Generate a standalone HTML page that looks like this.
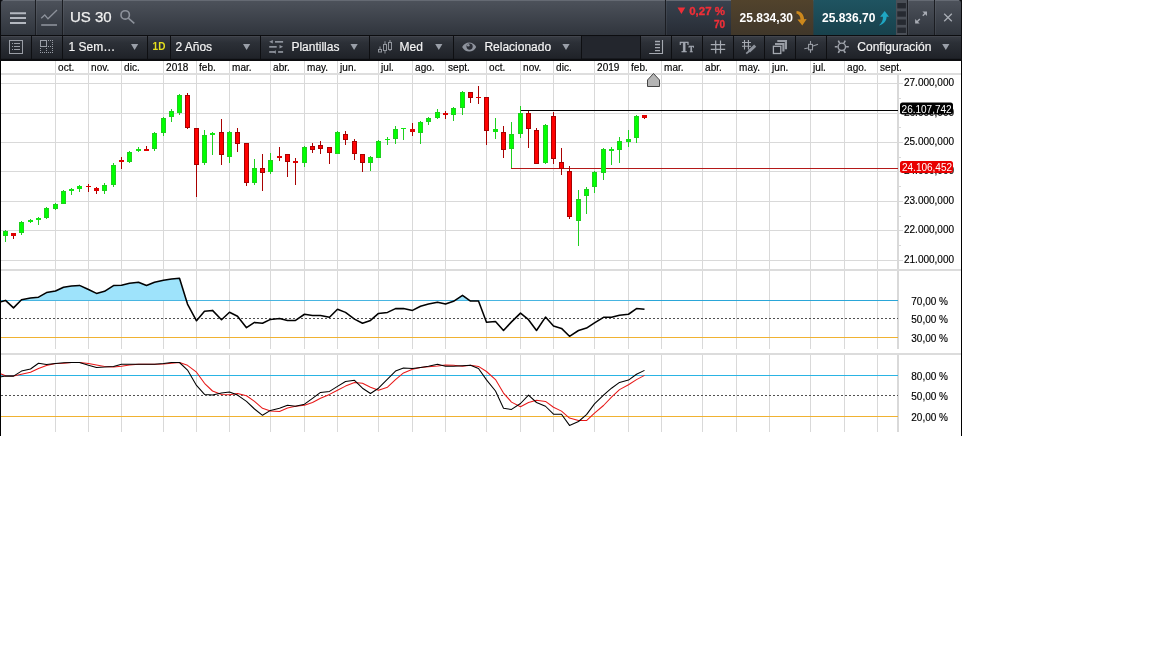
<!DOCTYPE html>
<html lang="es"><head><meta charset="utf-8"><title>US 30</title>
<style>html,body{margin:0;padding:0;background:#fff;overflow:hidden}body{width:1152px;height:648px;position:relative;font-family:"Liberation Sans",Arial,sans-serif}svg{position:absolute;left:0;top:0;display:block;will-change:transform;opacity:.999}text{font-family:"Liberation Sans",Arial,sans-serif}</style></head><body>
<svg width="1152" height="648" viewBox="0 0 1152 648">
<defs>
<linearGradient id="gTop" x1="0" y1="0" x2="0" y2="1"><stop offset="0" stop-color="#4d525b"/><stop offset="1" stop-color="#30353d"/></linearGradient>
<linearGradient id="gBtn" x1="0" y1="0" x2="0" y2="1"><stop offset="0" stop-color="#393d45"/><stop offset="0.3" stop-color="#2c3037"/><stop offset="1" stop-color="#1f2228"/></linearGradient>
<linearGradient id="gChg" x1="0" y1="0" x2="0" y2="1"><stop offset="0" stop-color="#39424e"/><stop offset="1" stop-color="#272c35"/></linearGradient>
<linearGradient id="gSell" x1="0" y1="0" x2="0" y2="1"><stop offset="0" stop-color="#52432c"/><stop offset="1" stop-color="#40372a"/></linearGradient>
<linearGradient id="gBuy" x1="0" y1="0" x2="0" y2="1"><stop offset="0" stop-color="#1f5461"/><stop offset="1" stop-color="#18414c"/></linearGradient>
</defs>
<rect x="0" y="0" width="1152" height="648" fill="#fff"/>
<g id="chart" shape-rendering="crispEdges">
<rect x="55.0" y="61" width="1" height="288" fill="#d9d9d9"/>
<rect x="55.0" y="355" width="1" height="77" fill="#d9d9d9"/>
<rect x="88.0" y="61" width="1" height="288" fill="#d9d9d9"/>
<rect x="88.0" y="355" width="1" height="77" fill="#d9d9d9"/>
<rect x="121.0" y="61" width="1" height="288" fill="#d9d9d9"/>
<rect x="121.0" y="355" width="1" height="77" fill="#d9d9d9"/>
<rect x="163.0" y="61" width="1" height="288" fill="#d9d9d9"/>
<rect x="163.0" y="355" width="1" height="77" fill="#d9d9d9"/>
<rect x="196.0" y="61" width="1" height="288" fill="#d9d9d9"/>
<rect x="196.0" y="355" width="1" height="77" fill="#d9d9d9"/>
<rect x="229.0" y="61" width="1" height="288" fill="#d9d9d9"/>
<rect x="229.0" y="355" width="1" height="77" fill="#d9d9d9"/>
<rect x="270.0" y="61" width="1" height="288" fill="#d9d9d9"/>
<rect x="270.0" y="355" width="1" height="77" fill="#d9d9d9"/>
<rect x="304.0" y="61" width="1" height="288" fill="#d9d9d9"/>
<rect x="304.0" y="355" width="1" height="77" fill="#d9d9d9"/>
<rect x="337.0" y="61" width="1" height="288" fill="#d9d9d9"/>
<rect x="337.0" y="355" width="1" height="77" fill="#d9d9d9"/>
<rect x="378.0" y="61" width="1" height="288" fill="#d9d9d9"/>
<rect x="378.0" y="355" width="1" height="77" fill="#d9d9d9"/>
<rect x="412.0" y="61" width="1" height="288" fill="#d9d9d9"/>
<rect x="412.0" y="355" width="1" height="77" fill="#d9d9d9"/>
<rect x="445.0" y="61" width="1" height="288" fill="#d9d9d9"/>
<rect x="445.0" y="355" width="1" height="77" fill="#d9d9d9"/>
<rect x="486.0" y="61" width="1" height="288" fill="#d9d9d9"/>
<rect x="486.0" y="355" width="1" height="77" fill="#d9d9d9"/>
<rect x="520.0" y="61" width="1" height="288" fill="#d9d9d9"/>
<rect x="520.0" y="355" width="1" height="77" fill="#d9d9d9"/>
<rect x="553.0" y="61" width="1" height="288" fill="#d9d9d9"/>
<rect x="553.0" y="355" width="1" height="77" fill="#d9d9d9"/>
<rect x="594.0" y="61" width="1" height="288" fill="#d9d9d9"/>
<rect x="594.0" y="355" width="1" height="77" fill="#d9d9d9"/>
<rect x="628.0" y="61" width="1" height="288" fill="#d9d9d9"/>
<rect x="628.0" y="355" width="1" height="77" fill="#d9d9d9"/>
<rect x="661.0" y="61" width="1" height="288" fill="#d9d9d9"/>
<rect x="661.0" y="355" width="1" height="77" fill="#d9d9d9"/>
<rect x="702.0" y="61" width="1" height="288" fill="#d9d9d9"/>
<rect x="702.0" y="355" width="1" height="77" fill="#d9d9d9"/>
<rect x="736.0" y="61" width="1" height="288" fill="#d9d9d9"/>
<rect x="736.0" y="355" width="1" height="77" fill="#d9d9d9"/>
<rect x="769.0" y="61" width="1" height="288" fill="#d9d9d9"/>
<rect x="769.0" y="355" width="1" height="77" fill="#d9d9d9"/>
<rect x="810.0" y="61" width="1" height="288" fill="#d9d9d9"/>
<rect x="810.0" y="355" width="1" height="77" fill="#d9d9d9"/>
<rect x="844.0" y="61" width="1" height="288" fill="#d9d9d9"/>
<rect x="844.0" y="355" width="1" height="77" fill="#d9d9d9"/>
<rect x="877.0" y="61" width="1" height="288" fill="#d9d9d9"/>
<rect x="877.0" y="355" width="1" height="77" fill="#d9d9d9"/>
<rect x="1" y="83" width="902" height="1" fill="#d9d9d9"/>
<rect x="1" y="113" width="902" height="1" fill="#d9d9d9"/>
<rect x="1" y="142" width="902" height="1" fill="#d9d9d9"/>
<rect x="1" y="171" width="902" height="1" fill="#d9d9d9"/>
<rect x="1" y="201" width="902" height="1" fill="#d9d9d9"/>
<rect x="1" y="230" width="902" height="1" fill="#d9d9d9"/>
<rect x="1" y="260" width="902" height="1" fill="#d9d9d9"/>
<rect x="899" y="98" width="2" height="1" fill="#d9d9d9"/>
<rect x="899" y="127" width="2" height="1" fill="#d9d9d9"/>
<rect x="899" y="157" width="2" height="1" fill="#d9d9d9"/>
<rect x="899" y="186" width="2" height="1" fill="#d9d9d9"/>
<rect x="899" y="216" width="2" height="1" fill="#d9d9d9"/>
<rect x="899" y="245" width="2" height="1" fill="#d9d9d9"/>
<rect x="1" y="73" width="960" height="2" fill="#dedede"/>
<rect x="897" y="74" width="2" height="275" fill="#d9d9d9"/>
<rect x="897" y="355" width="2" height="77" fill="#d9d9d9"/>
<rect x="1" y="269" width="960" height="2" fill="#dcdcdc"/>
<rect x="1" y="353" width="960" height="2" fill="#dcdcdc"/>
</g>
<g font-size="10" fill="#000" stroke="#000" stroke-width="0.15">
<text x="58.1" y="71.2">oct.</text>
<text x="91.1" y="71.2">nov.</text>
<text x="124.1" y="71.2">dic.</text>
<text x="166.1" y="71.2">2018</text>
<text x="199.1" y="71.2">feb.</text>
<text x="232.1" y="71.2">mar.</text>
<text x="273.1" y="71.2">abr.</text>
<text x="307.1" y="71.2">may.</text>
<text x="340.1" y="71.2">jun.</text>
<text x="381.1" y="71.2">jul.</text>
<text x="415.1" y="71.2">ago.</text>
<text x="448.1" y="71.2">sept.</text>
<text x="489.1" y="71.2">oct.</text>
<text x="523.1" y="71.2">nov.</text>
<text x="556.1" y="71.2">dic.</text>
<text x="597.1" y="71.2">2019</text>
<text x="631.1" y="71.2">feb.</text>
<text x="664.1" y="71.2">mar.</text>
<text x="705.1" y="71.2">abr.</text>
<text x="739.1" y="71.2">may.</text>
<text x="772.1" y="71.2">jun.</text>
<text x="813.1" y="71.2">jul.</text>
<text x="847.1" y="71.2">ago.</text>
<text x="880.1" y="71.2">sept.</text>
</g>
<g font-size="10" fill="#000" stroke="#000" stroke-width="0.15">
<text x="904" y="86.4">27.000,000</text>
<text x="904" y="116.4">26.000,000</text>
<text x="904" y="145.4">25.000,000</text>
<text x="904" y="174.4">24.000,000</text>
<text x="904" y="204.4">23.000,000</text>
<text x="904" y="233.4">22.000,000</text>
<text x="904" y="263.4">21.000,000</text>
</g>
<g shape-rendering="crispEdges">
<rect x="1" y="300" width="897" height="1" fill="#2aa6d8"/>
<rect x="1" y="337" width="897" height="1" fill="#f0b232"/>
<rect x="1" y="375" width="897" height="1" fill="#2ab4e4"/>
<rect x="1" y="416" width="897" height="1" fill="#f0b232"/>
<line x1="1" y1="318.5" x2="898" y2="318.5" stroke="#505050" stroke-width="1" stroke-dasharray="2 2"/>
<line x1="1" y1="395.5" x2="898" y2="395.5" stroke="#505050" stroke-width="1" stroke-dasharray="2 2"/>
</g>
<clipPath id="c70"><rect x="0" y="270" width="898" height="30.5"/></clipPath>
<polygon clip-path="url(#c70)" points="0.0,300.5 0.0,302.0 5.5,300.4 13.5,307.9 21.5,299.7 30.5,298.1 38.5,297.2 46.5,292.6 55.5,291.0 63.5,287.2 71.5,286.0 79.5,285.4 88.5,289.5 96.5,293.4 104.5,291.3 113.5,285.6 121.5,285.2 129.5,283.3 138.5,282.3 146.5,285.5 154.5,282.3 163.5,280.3 171.5,279.1 179.5,278.3 187.5,304.1 196.5,320.8 204.5,311.3 212.5,310.4 221.5,319.7 229.5,312.2 237.5,316.2 246.5,327.7 254.5,322.4 262.5,323.3 270.5,319.4 279.5,318.4 287.5,320.4 295.5,320.4 304.5,314.25 312.5,315.5 320.5,315.5 329.5,317.3 337.5,309.25 345.5,312.4 354.5,319.1 362.5,323.3 370.5,320.4 378.5,313.4 387.5,312.4 395.5,308.6 403.5,308.6 412.5,310.4 420.5,306.2 428.5,304.1 437.5,302.3 445.5,304.1 453.5,301.3 462.5,295.4 470.5,301.05 478.5,301.05 486.5,322.2 495.5,321.5 503.5,330.5 511.5,321.9 520.5,313.1 528.5,319.7 536.5,330.5 545.5,317.1 553.5,326.05 561.5,328.4 569.5,336.3 578.5,330.5 586.5,328.1 594.5,322.9 603.5,317.3 611.5,317.3 619.5,315.2 628.5,314.25 636.5,308.6 644.5,309.25 644.5,300.5" fill="#9ee3fb"/>
<polyline points="0.0,302.0 5.5,300.4 13.5,307.9 21.5,299.7 30.5,298.1 38.5,297.2 46.5,292.6 55.5,291.0 63.5,287.2 71.5,286.0 79.5,285.4 88.5,289.5 96.5,293.4 104.5,291.3 113.5,285.6 121.5,285.2 129.5,283.3 138.5,282.3 146.5,285.5 154.5,282.3 163.5,280.3 171.5,279.1 179.5,278.3 187.5,304.1 196.5,320.8 204.5,311.3 212.5,310.4 221.5,319.7 229.5,312.2 237.5,316.2 246.5,327.7 254.5,322.4 262.5,323.3 270.5,319.4 279.5,318.4 287.5,320.4 295.5,320.4 304.5,314.25 312.5,315.5 320.5,315.5 329.5,317.3 337.5,309.25 345.5,312.4 354.5,319.1 362.5,323.3 370.5,320.4 378.5,313.4 387.5,312.4 395.5,308.6 403.5,308.6 412.5,310.4 420.5,306.2 428.5,304.1 437.5,302.3 445.5,304.1 453.5,301.3 462.5,295.4 470.5,301.05 478.5,301.05 486.5,322.2 495.5,321.5 503.5,330.5 511.5,321.9 520.5,313.1 528.5,319.7 536.5,330.5 545.5,317.1 553.5,326.05 561.5,328.4 569.5,336.3 578.5,330.5 586.5,328.1 594.5,322.9 603.5,317.3 611.5,317.3 619.5,315.2 628.5,314.25 636.5,308.6 644.5,309.25" fill="none" stroke="#000" stroke-width="1.55" stroke-linejoin="round"/>
<polyline points="0.0,373.6 5.5,375.7 13.5,376.1 21.5,374.3 30.5,372.2 38.5,368.5 46.5,365.6 55.5,363.6 63.5,363.2 71.5,362.5 79.5,362.5 88.5,363.5 96.5,365.0 104.5,366.4 113.5,367.1 121.5,366.25 129.5,365.0 138.5,364.3 146.5,364.3 154.5,364.3 163.5,363.9 171.5,363.2 179.5,362.5 187.5,365.3 196.5,372.2 204.5,383.3 212.5,391.0 221.5,394.4 229.5,394.7 237.5,393.5 246.5,395.8 254.5,401.4 262.5,408.3 270.5,411.1 279.5,411.4 287.5,408.05 295.5,406.25 304.5,405.3 312.5,402.5 320.5,398.2 329.5,394.4 337.5,390.3 345.5,386.1 354.5,382.4 362.5,383.3 370.5,387.2 378.5,390.3 387.5,387.2 395.5,379.6 403.5,372.9 412.5,369.2 420.5,367.4 428.5,366.7 437.5,366.0 445.5,365.0 453.5,365.3 462.5,366.25 470.5,365.3 478.5,366.4 486.5,371.5 495.5,379.6 503.5,393.05 511.5,402.1 520.5,406.7 528.5,402.5 536.5,400.3 545.5,401.4 553.5,407.2 561.5,411.1 569.5,418.05 578.5,420.4 586.5,420.55 594.5,413.2 603.5,405.5 611.5,397.2 619.5,389.6 628.5,384.7 636.5,379.6 644.5,375.4" fill="none" stroke="#e81818" stroke-width="1.05" stroke-linejoin="round"/>
<polyline points="0.0,377.1 5.5,376.1 13.5,376.1 21.5,371.1 30.5,369.0 38.5,363.2 46.5,364.6 55.5,363.5 63.5,362.8 71.5,362.5 79.5,362.5 88.5,365.3 96.5,367.4 104.5,367.1 113.5,366.4 121.5,364.2 129.5,364.3 138.5,364.3 146.5,364.3 154.5,364.3 163.5,363.5 171.5,362.5 179.5,362.5 187.5,370.1 196.5,385.4 204.5,394.4 212.5,395.1 221.5,393.05 229.5,392.1 237.5,395.1 246.5,401.4 254.5,409.0 262.5,415.3 270.5,410.4 279.5,408.3 287.5,405.3 295.5,406.25 304.5,404.2 312.5,398.3 320.5,392.4 329.5,391.4 337.5,386.4 345.5,381.5 354.5,380.3 362.5,388.2 370.5,393.5 378.5,388.2 387.5,379.2 395.5,371.1 403.5,368.05 412.5,368.5 420.5,367.4 428.5,366.25 437.5,364.3 445.5,366.25 453.5,366.25 462.5,365.7 470.5,365.3 478.5,368.5 486.5,379.9 495.5,391.0 503.5,408.3 511.5,409.4 520.5,403.5 528.5,395.1 536.5,402.5 545.5,406.25 553.5,414.2 561.5,414.3 569.5,425.4 578.5,421.5 586.5,414.6 594.5,403.9 603.5,395.1 611.5,388.2 619.5,382.4 628.5,380.1 636.5,374.3 644.5,370.4" fill="none" stroke="#000" stroke-width="1.05" stroke-linejoin="round"/>
<g font-size="10" fill="#000" stroke="#000" stroke-width="0.15">
<text x="911.3" y="305.4">70,00 %</text>
<text x="911.3" y="323.4">50,00 %</text>
<text x="911.3" y="342.4">30,00 %</text>
<text x="911.3" y="380.4">80,00 %</text>
<text x="911.3" y="400.4">50,00 %</text>
<text x="911.3" y="421.4">20,00 %</text>
</g>
<g shape-rendering="crispEdges">
<rect x="511" y="168" width="387" height="1" fill="#b41818"/>
<rect x="520" y="110" width="378" height="1" fill="#000"/>
</g>
<g shape-rendering="crispEdges">
<rect x="5.0" y="230" width="1" height="12" fill="#1fcf1f"/>
<rect x="3.0" y="231" width="5" height="5" fill="#1fcf1f"/>
<rect x="4.0" y="232" width="3" height="3" fill="#00ff00"/>
<rect x="13.0" y="233" width="1" height="6" fill="#a80000"/>
<rect x="11.0" y="233" width="5" height="3" fill="#e00000"/>
<rect x="21.0" y="221" width="1" height="14" fill="#1fcf1f"/>
<rect x="19.0" y="222" width="5" height="11" fill="#1fcf1f"/>
<rect x="20.0" y="223" width="3" height="9" fill="#00ff00"/>
<rect x="30.0" y="219" width="1" height="4" fill="#1fcf1f"/>
<rect x="28.0" y="220" width="5" height="2" fill="#10e810"/>
<rect x="38.0" y="217" width="1" height="8" fill="#1fcf1f"/>
<rect x="36.0" y="218" width="5" height="2" fill="#10e810"/>
<rect x="46.0" y="207" width="1" height="12" fill="#1fcf1f"/>
<rect x="44.0" y="208" width="5" height="10" fill="#1fcf1f"/>
<rect x="45.0" y="209" width="3" height="8" fill="#00ff00"/>
<rect x="55.0" y="203" width="1" height="7" fill="#1fcf1f"/>
<rect x="53.0" y="204" width="5" height="5" fill="#1fcf1f"/>
<rect x="54.0" y="205" width="3" height="3" fill="#00ff00"/>
<rect x="63.0" y="190" width="1" height="14" fill="#1fcf1f"/>
<rect x="61.0" y="191" width="5" height="13" fill="#1fcf1f"/>
<rect x="62.0" y="192" width="3" height="11" fill="#00ff00"/>
<rect x="71.0" y="188" width="1" height="7" fill="#1fcf1f"/>
<rect x="69.0" y="189" width="5" height="2" fill="#10e810"/>
<rect x="79.0" y="185" width="1" height="7" fill="#1fcf1f"/>
<rect x="77.0" y="186" width="5" height="3" fill="#10e810"/>
<rect x="88.0" y="184" width="1" height="8" fill="#a80000"/>
<rect x="86.0" y="186" width="5" height="1" fill="#e00000"/>
<rect x="96.0" y="187" width="1" height="7" fill="#a80000"/>
<rect x="94.0" y="188" width="5" height="3" fill="#e00000"/>
<rect x="104.0" y="183" width="1" height="11" fill="#1fcf1f"/>
<rect x="102.0" y="185" width="5" height="6" fill="#1fcf1f"/>
<rect x="103.0" y="186" width="3" height="4" fill="#00ff00"/>
<rect x="113.0" y="163" width="1" height="24" fill="#1fcf1f"/>
<rect x="111.0" y="165" width="5" height="20" fill="#1fcf1f"/>
<rect x="112.0" y="166" width="3" height="18" fill="#00ff00"/>
<rect x="121.0" y="157" width="1" height="12" fill="#a80000"/>
<rect x="119.0" y="160" width="5" height="2" fill="#e00000"/>
<rect x="129.0" y="151" width="1" height="12" fill="#1fcf1f"/>
<rect x="127.0" y="152" width="5" height="10" fill="#1fcf1f"/>
<rect x="128.0" y="153" width="3" height="8" fill="#00ff00"/>
<rect x="138.0" y="147" width="1" height="5" fill="#1fcf1f"/>
<rect x="136.0" y="149" width="5" height="2" fill="#10e810"/>
<rect x="146.0" y="146" width="1" height="5" fill="#a80000"/>
<rect x="144.0" y="149" width="5" height="2" fill="#e00000"/>
<rect x="154.0" y="132" width="1" height="19" fill="#1fcf1f"/>
<rect x="152.0" y="133" width="5" height="16" fill="#1fcf1f"/>
<rect x="153.0" y="134" width="3" height="14" fill="#00ff00"/>
<rect x="163.0" y="117" width="1" height="19" fill="#1fcf1f"/>
<rect x="161.0" y="118" width="5" height="15" fill="#1fcf1f"/>
<rect x="162.0" y="119" width="3" height="13" fill="#00ff00"/>
<rect x="171.0" y="109" width="1" height="13" fill="#1fcf1f"/>
<rect x="169.0" y="111" width="5" height="6" fill="#1fcf1f"/>
<rect x="170.0" y="112" width="3" height="4" fill="#00ff00"/>
<rect x="179.0" y="94" width="1" height="21" fill="#1fcf1f"/>
<rect x="177.0" y="95" width="5" height="18" fill="#1fcf1f"/>
<rect x="178.0" y="96" width="3" height="16" fill="#00ff00"/>
<rect x="187.0" y="93" width="1" height="36" fill="#a80000"/>
<rect x="185.0" y="95" width="5" height="33" fill="#a80000"/>
<rect x="186.0" y="96" width="3" height="31" fill="#ff0000"/>
<rect x="196.0" y="128" width="1" height="69" fill="#a80000"/>
<rect x="194.0" y="128" width="5" height="37" fill="#a80000"/>
<rect x="195.0" y="129" width="3" height="35" fill="#ff0000"/>
<rect x="204.0" y="130" width="1" height="35" fill="#1fcf1f"/>
<rect x="202.0" y="135" width="5" height="28" fill="#1fcf1f"/>
<rect x="203.0" y="136" width="3" height="26" fill="#00ff00"/>
<rect x="212.0" y="132" width="1" height="23" fill="#1fcf1f"/>
<rect x="210.0" y="133" width="5" height="2" fill="#10e810"/>
<rect x="221.0" y="119" width="1" height="46" fill="#a80000"/>
<rect x="219.0" y="132" width="5" height="23" fill="#a80000"/>
<rect x="220.0" y="133" width="3" height="21" fill="#ff0000"/>
<rect x="229.0" y="131" width="1" height="32" fill="#1fcf1f"/>
<rect x="227.0" y="132" width="5" height="25" fill="#1fcf1f"/>
<rect x="228.0" y="133" width="3" height="23" fill="#00ff00"/>
<rect x="237.0" y="128" width="1" height="24" fill="#a80000"/>
<rect x="235.0" y="132" width="5" height="12" fill="#a80000"/>
<rect x="236.0" y="133" width="3" height="10" fill="#ff0000"/>
<rect x="246.0" y="143" width="1" height="43" fill="#a80000"/>
<rect x="244.0" y="143" width="5" height="40" fill="#a80000"/>
<rect x="245.0" y="144" width="3" height="38" fill="#ff0000"/>
<rect x="254.0" y="159" width="1" height="26" fill="#1fcf1f"/>
<rect x="252.0" y="168" width="5" height="15" fill="#1fcf1f"/>
<rect x="253.0" y="169" width="3" height="13" fill="#00ff00"/>
<rect x="262.0" y="154" width="1" height="37" fill="#a80000"/>
<rect x="260.0" y="168" width="5" height="5" fill="#a80000"/>
<rect x="261.0" y="169" width="3" height="3" fill="#ff0000"/>
<rect x="270.0" y="153" width="1" height="21" fill="#1fcf1f"/>
<rect x="268.0" y="160" width="5" height="12" fill="#1fcf1f"/>
<rect x="269.0" y="161" width="3" height="10" fill="#00ff00"/>
<rect x="279.0" y="147" width="1" height="14" fill="#a80000"/>
<rect x="277.0" y="156" width="5" height="2" fill="#e00000"/>
<rect x="287.0" y="154" width="1" height="23" fill="#a80000"/>
<rect x="285.0" y="154" width="5" height="8" fill="#a80000"/>
<rect x="286.0" y="155" width="3" height="6" fill="#ff0000"/>
<rect x="295.0" y="158" width="1" height="27" fill="#a80000"/>
<rect x="293.0" y="161" width="5" height="2" fill="#e00000"/>
<rect x="304.0" y="146" width="1" height="21" fill="#1fcf1f"/>
<rect x="302.0" y="147" width="5" height="16" fill="#1fcf1f"/>
<rect x="303.0" y="148" width="3" height="14" fill="#00ff00"/>
<rect x="312.0" y="143" width="1" height="10" fill="#a80000"/>
<rect x="310.0" y="146" width="5" height="4" fill="#a80000"/>
<rect x="311.0" y="147" width="3" height="2" fill="#ff0000"/>
<rect x="320.0" y="141" width="1" height="13" fill="#a80000"/>
<rect x="318.0" y="145" width="5" height="4" fill="#a80000"/>
<rect x="319.0" y="146" width="3" height="2" fill="#ff0000"/>
<rect x="329.0" y="147" width="1" height="17" fill="#a80000"/>
<rect x="327.0" y="147" width="5" height="6" fill="#a80000"/>
<rect x="328.0" y="148" width="3" height="4" fill="#ff0000"/>
<rect x="337.0" y="131" width="1" height="23" fill="#1fcf1f"/>
<rect x="335.0" y="132" width="5" height="22" fill="#1fcf1f"/>
<rect x="336.0" y="133" width="3" height="20" fill="#00ff00"/>
<rect x="345.0" y="131" width="1" height="14" fill="#a80000"/>
<rect x="343.0" y="134" width="5" height="6" fill="#a80000"/>
<rect x="344.0" y="135" width="3" height="4" fill="#ff0000"/>
<rect x="354.0" y="139" width="1" height="21" fill="#a80000"/>
<rect x="352.0" y="141" width="5" height="13" fill="#a80000"/>
<rect x="353.0" y="142" width="3" height="11" fill="#ff0000"/>
<rect x="362.0" y="154" width="1" height="18" fill="#a80000"/>
<rect x="360.0" y="154" width="5" height="9" fill="#a80000"/>
<rect x="361.0" y="155" width="3" height="7" fill="#ff0000"/>
<rect x="370.0" y="156" width="1" height="15" fill="#1fcf1f"/>
<rect x="368.0" y="157" width="5" height="6" fill="#1fcf1f"/>
<rect x="369.0" y="158" width="3" height="4" fill="#00ff00"/>
<rect x="378.0" y="140" width="1" height="18" fill="#1fcf1f"/>
<rect x="376.0" y="141" width="5" height="17" fill="#1fcf1f"/>
<rect x="377.0" y="142" width="3" height="15" fill="#00ff00"/>
<rect x="387.0" y="137" width="1" height="8" fill="#1fcf1f"/>
<rect x="385.0" y="139" width="5" height="1" fill="#10e810"/>
<rect x="395.0" y="126" width="1" height="18" fill="#1fcf1f"/>
<rect x="393.0" y="129" width="5" height="10" fill="#1fcf1f"/>
<rect x="394.0" y="130" width="3" height="8" fill="#00ff00"/>
<rect x="403.0" y="128" width="1" height="12" fill="#1fcf1f"/>
<rect x="401.0" y="128" width="5" height="1" fill="#10e810"/>
<rect x="412.0" y="123" width="1" height="13" fill="#a80000"/>
<rect x="410.0" y="129" width="5" height="3" fill="#e00000"/>
<rect x="420.0" y="121" width="1" height="23" fill="#1fcf1f"/>
<rect x="418.0" y="122" width="5" height="11" fill="#1fcf1f"/>
<rect x="419.0" y="123" width="3" height="9" fill="#00ff00"/>
<rect x="428.0" y="117" width="1" height="8" fill="#1fcf1f"/>
<rect x="426.0" y="118" width="5" height="4" fill="#1fcf1f"/>
<rect x="427.0" y="119" width="3" height="2" fill="#00ff00"/>
<rect x="437.0" y="109" width="1" height="10" fill="#1fcf1f"/>
<rect x="435.0" y="112" width="5" height="6" fill="#1fcf1f"/>
<rect x="436.0" y="113" width="3" height="4" fill="#00ff00"/>
<rect x="445.0" y="111" width="1" height="8" fill="#a80000"/>
<rect x="443.0" y="113" width="5" height="2" fill="#e00000"/>
<rect x="453.0" y="107" width="1" height="14" fill="#1fcf1f"/>
<rect x="451.0" y="108" width="5" height="7" fill="#1fcf1f"/>
<rect x="452.0" y="109" width="3" height="5" fill="#00ff00"/>
<rect x="462.0" y="91" width="1" height="24" fill="#1fcf1f"/>
<rect x="460.0" y="92" width="5" height="16" fill="#1fcf1f"/>
<rect x="461.0" y="93" width="3" height="14" fill="#00ff00"/>
<rect x="470.0" y="92" width="1" height="11" fill="#a80000"/>
<rect x="468.0" y="92" width="5" height="6" fill="#a80000"/>
<rect x="469.0" y="93" width="3" height="4" fill="#ff0000"/>
<rect x="478.0" y="86" width="1" height="18" fill="#a80000"/>
<rect x="476.0" y="97" width="5" height="1" fill="#e00000"/>
<rect x="486.0" y="97" width="1" height="48" fill="#a80000"/>
<rect x="484.0" y="97" width="5" height="34" fill="#a80000"/>
<rect x="485.0" y="98" width="3" height="32" fill="#ff0000"/>
<rect x="495.0" y="118" width="1" height="21" fill="#1fcf1f"/>
<rect x="493.0" y="129" width="5" height="3" fill="#10e810"/>
<rect x="503.0" y="126" width="1" height="32" fill="#a80000"/>
<rect x="501.0" y="132" width="5" height="18" fill="#a80000"/>
<rect x="502.0" y="133" width="3" height="16" fill="#ff0000"/>
<rect x="511.0" y="122" width="1" height="46" fill="#1fcf1f"/>
<rect x="509.0" y="134" width="5" height="15" fill="#1fcf1f"/>
<rect x="510.0" y="135" width="3" height="13" fill="#00ff00"/>
<rect x="520.0" y="106" width="1" height="32" fill="#1fcf1f"/>
<rect x="518.0" y="113" width="5" height="21" fill="#1fcf1f"/>
<rect x="519.0" y="114" width="3" height="19" fill="#00ff00"/>
<rect x="528.0" y="111" width="1" height="37" fill="#a80000"/>
<rect x="526.0" y="113" width="5" height="16" fill="#a80000"/>
<rect x="527.0" y="114" width="3" height="14" fill="#ff0000"/>
<rect x="536.0" y="128" width="1" height="36" fill="#a80000"/>
<rect x="534.0" y="130" width="5" height="34" fill="#a80000"/>
<rect x="535.0" y="131" width="3" height="32" fill="#ff0000"/>
<rect x="545.0" y="124" width="1" height="40" fill="#1fcf1f"/>
<rect x="543.0" y="125" width="5" height="38" fill="#1fcf1f"/>
<rect x="544.0" y="126" width="3" height="36" fill="#00ff00"/>
<rect x="553.0" y="112" width="1" height="52" fill="#a80000"/>
<rect x="551.0" y="116" width="5" height="43" fill="#a80000"/>
<rect x="552.0" y="117" width="3" height="41" fill="#ff0000"/>
<rect x="561.0" y="148" width="1" height="27" fill="#a80000"/>
<rect x="559.0" y="162" width="5" height="7" fill="#a80000"/>
<rect x="560.0" y="163" width="3" height="5" fill="#ff0000"/>
<rect x="569.0" y="166" width="1" height="53" fill="#a80000"/>
<rect x="567.0" y="171" width="5" height="46" fill="#a80000"/>
<rect x="568.0" y="172" width="3" height="44" fill="#ff0000"/>
<rect x="578.0" y="190" width="1" height="56" fill="#1fcf1f"/>
<rect x="576.0" y="199" width="5" height="22" fill="#1fcf1f"/>
<rect x="577.0" y="200" width="3" height="20" fill="#00ff00"/>
<rect x="586.0" y="187" width="1" height="27" fill="#1fcf1f"/>
<rect x="584.0" y="189" width="5" height="7" fill="#1fcf1f"/>
<rect x="585.0" y="190" width="3" height="5" fill="#00ff00"/>
<rect x="594.0" y="171" width="1" height="22" fill="#1fcf1f"/>
<rect x="592.0" y="172" width="5" height="15" fill="#1fcf1f"/>
<rect x="593.0" y="173" width="3" height="13" fill="#00ff00"/>
<rect x="603.0" y="148" width="1" height="32" fill="#1fcf1f"/>
<rect x="601.0" y="149" width="5" height="24" fill="#1fcf1f"/>
<rect x="602.0" y="150" width="3" height="22" fill="#00ff00"/>
<rect x="611.0" y="147" width="1" height="18" fill="#1fcf1f"/>
<rect x="609.0" y="149" width="5" height="2" fill="#10e810"/>
<rect x="619.0" y="137" width="1" height="26" fill="#1fcf1f"/>
<rect x="617.0" y="141" width="5" height="9" fill="#1fcf1f"/>
<rect x="618.0" y="142" width="3" height="7" fill="#00ff00"/>
<rect x="628.0" y="130" width="1" height="17" fill="#1fcf1f"/>
<rect x="626.0" y="139" width="5" height="3" fill="#10e810"/>
<rect x="636.0" y="115" width="1" height="28" fill="#1fcf1f"/>
<rect x="634.0" y="116" width="5" height="22" fill="#1fcf1f"/>
<rect x="635.0" y="117" width="3" height="20" fill="#00ff00"/>
<rect x="644.0" y="115" width="1" height="4" fill="#a80000"/>
<rect x="642.0" y="115" width="5" height="3" fill="#e00000"/>
</g>
<path d="M647.5 86.5 V80 L653.5 73.5 L659.5 80 V86.5 Z" fill="#b4b4b4" stroke="#444" stroke-width="1"/>
<rect x="900" y="102.5" width="53" height="12" rx="2.5" fill="#000"/>
<text x="901.6" y="112.6" font-size="10" fill="#fff">26.107,742</text>
<rect x="900" y="161" width="53" height="12" rx="2.5" fill="#e80000"/>
<text x="902" y="171" font-size="10" fill="#fff">24.106,452</text>
<g shape-rendering="crispEdges">
<rect x="0" y="0" width="1" height="436" fill="#000"/>
<rect x="961" y="0" width="1" height="436" fill="#000"/>
</g>
<g id="bars">
<rect x="0" y="0" width="962" height="61" fill="#0c0d10"/>
<path d="M1 35 V3 Q1 0 4 0 H958 Q961 0 961 3 V35 Z" fill="url(#gTop)"/>
<rect x="3" y="0" width="956" height="1" fill="#6b7079" opacity="0.8"/>
<rect x="665" y="1" width="66" height="34" fill="url(#gChg)"/>
<rect x="731" y="0" width="82.5" height="35" fill="url(#gSell)"/>
<rect x="813.5" y="0" width="82.5" height="35" fill="url(#gBuy)"/>
<rect x="35" y="0" width="1" height="35" fill="#1b1d22" shape-rendering="crispEdges"/>
<rect x="36" y="1" width="1" height="34" fill="#ffffff" opacity="0.06" shape-rendering="crispEdges"/>
<rect x="62" y="0" width="1" height="35" fill="#1b1d22" shape-rendering="crispEdges"/>
<rect x="63" y="1" width="1" height="34" fill="#ffffff" opacity="0.06" shape-rendering="crispEdges"/>
<rect x="665" y="0" width="1" height="35" fill="#1b1d22" shape-rendering="crispEdges"/>
<rect x="666" y="1" width="1" height="34" fill="#ffffff" opacity="0.06" shape-rendering="crispEdges"/>
<rect x="907" y="0" width="1" height="35" fill="#1b1d22" shape-rendering="crispEdges"/>
<rect x="908" y="1" width="1" height="34" fill="#ffffff" opacity="0.06" shape-rendering="crispEdges"/>
<rect x="934" y="0" width="1" height="35" fill="#1b1d22" shape-rendering="crispEdges"/>
<rect x="935" y="1" width="1" height="34" fill="#ffffff" opacity="0.06" shape-rendering="crispEdges"/>
<rect x="896" y="0" width="11" height="35" fill="#4a4f57"/>
<rect x="897.3" y="3" width="8.6" height="5.4" fill="#262a31"/>
<rect x="897.3" y="11.3" width="8.6" height="5.4" fill="#262a31"/>
<rect x="897.3" y="19.5" width="8.6" height="5.4" fill="#262a31"/>
<rect x="897.3" y="27.6" width="8.6" height="5.4" fill="#262a31"/>
<rect x="1" y="36" width="960" height="22.5" fill="#23262d"/>
<rect x="1" y="36" width="30" height="22.5" fill="url(#gBtn)"/>
<rect x="1" y="36" width="30" height="1" fill="#fff" opacity="0.05"/>
<rect x="32" y="36" width="30" height="22.5" fill="url(#gBtn)"/>
<rect x="32" y="36" width="30" height="1" fill="#fff" opacity="0.05"/>
<rect x="63" y="36" width="84" height="22.5" fill="url(#gBtn)"/>
<rect x="63" y="36" width="84" height="1" fill="#fff" opacity="0.05"/>
<rect x="148" y="36" width="22" height="22.5" fill="url(#gBtn)"/>
<rect x="148" y="36" width="22" height="1" fill="#fff" opacity="0.05"/>
<rect x="171" y="36" width="89" height="22.5" fill="url(#gBtn)"/>
<rect x="171" y="36" width="89" height="1" fill="#fff" opacity="0.05"/>
<rect x="261" y="36" width="108" height="22.5" fill="url(#gBtn)"/>
<rect x="261" y="36" width="108" height="1" fill="#fff" opacity="0.05"/>
<rect x="370" y="36" width="83" height="22.5" fill="url(#gBtn)"/>
<rect x="370" y="36" width="83" height="1" fill="#fff" opacity="0.05"/>
<rect x="454" y="36" width="127" height="22.5" fill="url(#gBtn)"/>
<rect x="454" y="36" width="127" height="1" fill="#fff" opacity="0.05"/>
<rect x="641" y="36" width="30" height="22.5" fill="url(#gBtn)"/>
<rect x="641" y="36" width="30" height="1" fill="#fff" opacity="0.05"/>
<rect x="672" y="36" width="30" height="22.5" fill="url(#gBtn)"/>
<rect x="672" y="36" width="30" height="1" fill="#fff" opacity="0.05"/>
<rect x="703" y="36" width="30" height="22.5" fill="url(#gBtn)"/>
<rect x="703" y="36" width="30" height="1" fill="#fff" opacity="0.05"/>
<rect x="734" y="36" width="30" height="22.5" fill="url(#gBtn)"/>
<rect x="734" y="36" width="30" height="1" fill="#fff" opacity="0.05"/>
<rect x="765" y="36" width="30" height="22.5" fill="url(#gBtn)"/>
<rect x="765" y="36" width="30" height="1" fill="#fff" opacity="0.05"/>
<rect x="796" y="36" width="30" height="22.5" fill="url(#gBtn)"/>
<rect x="796" y="36" width="30" height="1" fill="#fff" opacity="0.05"/>
<rect x="827" y="36" width="134" height="22.5" fill="url(#gBtn)"/>
<rect x="827" y="36" width="134" height="1" fill="#fff" opacity="0.05"/>
<rect x="31" y="36" width="1" height="23" fill="#0e0f12" shape-rendering="crispEdges"/>
<rect x="62" y="36" width="1" height="23" fill="#0e0f12" shape-rendering="crispEdges"/>
<rect x="147" y="36" width="1" height="23" fill="#0e0f12" shape-rendering="crispEdges"/>
<rect x="170" y="36" width="1" height="23" fill="#0e0f12" shape-rendering="crispEdges"/>
<rect x="260" y="36" width="1" height="23" fill="#0e0f12" shape-rendering="crispEdges"/>
<rect x="369" y="36" width="1" height="23" fill="#0e0f12" shape-rendering="crispEdges"/>
<rect x="453" y="36" width="1" height="23" fill="#0e0f12" shape-rendering="crispEdges"/>
<rect x="581" y="36" width="1" height="23" fill="#0e0f12" shape-rendering="crispEdges"/>
<rect x="640" y="36" width="1" height="23" fill="#0e0f12" shape-rendering="crispEdges"/>
<rect x="671" y="36" width="1" height="23" fill="#0e0f12" shape-rendering="crispEdges"/>
<rect x="702" y="36" width="1" height="23" fill="#0e0f12" shape-rendering="crispEdges"/>
<rect x="733" y="36" width="1" height="23" fill="#0e0f12" shape-rendering="crispEdges"/>
<rect x="764" y="36" width="1" height="23" fill="#0e0f12" shape-rendering="crispEdges"/>
<rect x="795" y="36" width="1" height="23" fill="#0e0f12" shape-rendering="crispEdges"/>
<rect x="826" y="36" width="1" height="23" fill="#0e0f12" shape-rendering="crispEdges"/>
</g>
<g stroke="#b4b8c0" stroke-width="2" fill="none"><path d="M10 13.2H26M10 18H26M10 22.9H26"/></g>
<g stroke="#8d929b" fill="none"><path d="M41.2 18.2 L44.8 15 L48 18.8 L57 10" stroke-width="1.3"/><path d="M41.2 25H57" stroke-width="1.6"/></g>
<text x="70" y="22" font-size="15" fill="#f0f0f0" stroke="#f0f0f0" stroke-width="0.25">US 30</text>
<g stroke="#8d929b" stroke-width="1.6" fill="none"><circle cx="125.2" cy="14.9" r="4.2"/><path d="M128.3 18.1 L134.3 23.3"/></g>
<path d="M677.5 7.6 H685.3 L681.4 14 Z" fill="#ee2f38"/>
<text x="725" y="14.8" font-size="11.5" font-weight="bold" fill="#ee2f38" stroke="#ee2f38" stroke-width="0.35" text-anchor="end">0,27 %</text>
<text x="725" y="27.9" font-size="10" font-weight="bold" fill="#ee2f38" stroke="#ee2f38" stroke-width="0.35" text-anchor="end">70</text>
<text x="739.6" y="21.9" font-size="12" font-weight="bold" fill="#fff">25.834,30</text>
<text x="822" y="21.9" font-size="12" font-weight="bold" fill="#fff">25.836,70</text>
<path d="M796.6 10.9 C801 11.3 804 14.6 804.1 19.3 L806.7 19.1 L802.3 25.4 L797.4 19.6 L800.5 19.4 C800.3 16 799 13.8 796.4 13.4 Z" fill="#cc881c"/>
<path d="M878.9 25.6 C883.6 24.2 886.6 21 886.6 16.8 L889 16.8 L884.7 11.1 L880.1 16.8 L883 16.8 C883 20.2 881.8 23 878.9 25.6 Z" fill="#1fa6c2"/>
<g fill="#b4b8c0" stroke="#b4b8c0" opacity="0.9"><path d="M922.4 11.5 H927 V16 Z" stroke="none"/><path d="M922.8 15.7 L925.4 13.1" stroke-width="1.4" fill="none"/><path d="M915.1 19 V23.6 H919.7 Z" stroke="none"/><path d="M916.8 22 L919.8 19" stroke-width="1.4" fill="none"/></g>
<g stroke="#b4b8c0" stroke-width="1.3" fill="none" opacity="0.9"><path d="M944.2 13.8 L951.8 21.2 M951.8 13.8 L944.2 21.2"/></g>
<g shape-rendering="crispEdges" fill="#9a9ea6"><path d="M9 40H23V54H9Z M10 41V53H22V41Z" fill-rule="evenodd"/><rect x="12" y="43" width="1" height="1"/><rect x="12" y="46" width="1" height="1"/><rect x="12" y="49" width="1" height="1"/><rect x="14" y="43" width="6" height="1.3"/><rect x="14" y="46" width="6" height="1.3"/><rect x="14" y="49" width="6" height="1.3"/></g>
<g shape-rendering="crispEdges" fill="#9a9ea6"><path d="M40 40H47V47H40Z M41 41V46H46V41Z" fill-rule="evenodd"/><rect x="48" y="40" width="1" height="1"/><rect x="50" y="40" width="1" height="1"/><rect x="52" y="40" width="1" height="1"/><rect x="52" y="42" width="1" height="1"/><rect x="52" y="44" width="1" height="1"/><rect x="52" y="46" width="1" height="1"/><rect x="52" y="48" width="1" height="1"/><rect x="52" y="50" width="1" height="1"/><rect x="52" y="52" width="1" height="1"/><rect x="48" y="46" width="1" height="1"/><rect x="50" y="46" width="1" height="1"/><rect x="40" y="48" width="1" height="1"/><rect x="40" y="50" width="1" height="1"/><rect x="40" y="52" width="1" height="1"/><rect x="46" y="48" width="1" height="1"/><rect x="46" y="50" width="1" height="1"/><rect x="46" y="52" width="1" height="1"/><rect x="42" y="52" width="1" height="1"/><rect x="44" y="52" width="1" height="1"/><rect x="48" y="52" width="1" height="1"/><rect x="50" y="52" width="1" height="1"/></g>
<g font-size="12" fill="#f4f4f4" stroke="#f4f4f4" stroke-width="0.18">
<text x="68.6" y="51">1 Sem…</text>
<text x="175.4" y="51">2 Años</text>
<text x="291.4" y="51">Plantillas</text>
<text x="399.6" y="51">Med</text>
<text x="484.4" y="51">Relacionado</text>
<text x="857.3" y="51">Configuración</text>
</g>
<text x="152.6" y="50.4" font-size="10" font-weight="bold" fill="#e6e01e">1D</text>
<path d="M131 44 H138.2 L134.6 50 Z" fill="#9a9fa8"/>
<path d="M243 44 H250.2 L246.6 50 Z" fill="#9a9fa8"/>
<path d="M350.5 44 H357.7 L354.1 50 Z" fill="#9a9fa8"/>
<path d="M435.2 44 H442.4 L438.8 50 Z" fill="#9a9fa8"/>
<path d="M562.4 44 H569.6 L566.0 50 Z" fill="#9a9fa8"/>
<path d="M942.2 44 H949.4000000000001 L945.8000000000001 50 Z" fill="#9a9fa8"/>
<g fill="#8f949d"><rect x="275" y="41" width="8.1" height="1.7"/><path d="M272.8 40.1V43.6L269.2 41.85Z"/><rect x="269.2" y="46" width="7.5" height="1.7"/><path d="M279.5 45.1V48.6L283.1 46.85Z"/><rect x="269.2" y="51.1" width="4.8" height="1.7"/><path d="M275.9 50.2V53.7L272.6 51.95Z"/><rect x="278.1" y="51.1" width="5" height="1.7"/></g>
<g stroke="#b4b8c0" stroke-width="1" fill="none" opacity="0.75"><rect x="378.5" y="49.5" width="3" height="2.5"/><path d="M380 46.5V49.5"/><rect x="383.5" y="44.5" width="3" height="6"/><path d="M385 41.3V44.5M385 50.5V53.5"/><rect x="388.5" y="42.5" width="3" height="7"/><path d="M390 40V42.5M390 49.5V51"/></g>
<g><path d="M462.2 47 C465 41 473.4 41 476.2 47 C473.4 53 465 53 462.2 47 Z" fill="#8e939d"/><circle cx="469.6" cy="46.6" r="3.1" fill="#2a2d35"/><circle cx="468.3" cy="45.3" r="1.3" fill="#8e939d"/></g>
<g stroke="#b4b8c0" fill="none" opacity="0.9"><path d="M649.2 53.5H663M662.5 39.9V53.8" stroke-width="1.1"/><path d="M655 41.5H660M655 44.5H660M655 47.6H660M655 50.6H660" stroke-width="1.3"/></g>
<text transform="translate(679.8,52.1) scale(0.85,1)" font-size="15.5" font-weight="bold" style="font-family:'Liberation Serif',serif" fill="#a2a7b0" stroke="#a2a7b0" stroke-width="0.45">T</text>
<text transform="translate(688.8,52.1) scale(0.85,1)" font-size="9" font-weight="bold" style="font-family:'Liberation Serif',serif" fill="#a2a7b0" stroke="#a2a7b0" stroke-width="0.45">T</text>
<g stroke="#b4b8c0" stroke-width="1.2" fill="none" opacity="0.9"><path d="M715.7 40.4V53.6M720.5 40.4V53.6M710.8 44.6H725.2M710.8 49.4H725.2"/></g>
<g stroke="#b4b8c0" fill="none" opacity="0.9"><path d="M744.5 39.9V49.6M748.4 39.9V49.6M742 42.5H751M742 46.3H751" stroke-width="1.1"/></g>
<g stroke="#8e939c" fill="none"><path d="M755.2 45.6 L749 51.4" stroke-width="3"/><path d="M749.6 50.8 L746.2 53.6" stroke-width="1.8"/></g>
<g opacity="0.9"><rect x="773.4" y="46.3" width="7.4" height="7.2" stroke="#b4b8c0" stroke-width="1.3" fill="none"/><path d="M775 42.9H784.5V51.6H782.3V45.1H775Z" fill="#a4a8b0"/><path d="M777.3 39.9H787V49.3H784.8V42.1H777.3Z" fill="#a4a8b0"/></g>
<g stroke="#b4b8c0" stroke-width="1.1" fill="none" opacity="0.8"><path d="M810.5 41V44.4M810.5 49.8V52.7"/><rect x="808.6" y="44.4" width="3.9" height="5.4"/><path d="M804.3 48.8L808 48M813 45.9L818 44.3"/></g>
<g stroke="#b4b8c0" fill="none" opacity="0.85"><circle cx="841.8" cy="46.8" r="3.7" stroke-width="1.4"/><path d="M846.1 46.8L848.8 46.8M843.9 50.5L845.3 52.9M839.6 50.5L838.3 52.9M837.5 46.8L834.8 46.8M839.6 43.1L838.3 40.7M843.9 43.1L845.3 40.7" stroke-width="1.6"/></g>
</svg></body></html>
